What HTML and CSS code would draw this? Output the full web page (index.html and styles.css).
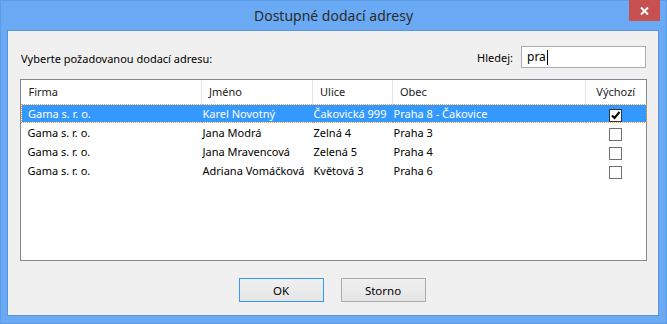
FILE: index.html
```html
<!DOCTYPE html>
<html lang="cs">
<head>
<meta charset="UTF-8" />
<title>Dostupné dodací adresy</title>
<link rel="stylesheet" href="styles.css">
</head>
<body>
  <div class="window">
    <div class="titlebar">
      <span class="title">Dostupné dodací adresy</span>
      <button class="close" type="button">
        <svg width="9" height="8" viewBox="0 0 9 8"><path d="M1 0.5 L8 7.5 M8 0.5 L1 7.5" stroke="#fff" stroke-width="2"/></svg>
      </button>
    </div>
    <div class="client">
      <div class="toprow">
        <span class="prompt">Vyberte požadovanou dodací adresu:</span>
        <label class="search">Hledej: <span class="input">pra<span class="caret"></span></span></label>
      </div>
      <div class="listbox">
        <table>
          <colgroup>
            <col class="c1"><col class="c2"><col class="c3"><col class="c4"><col class="c5">
          </colgroup>
          <thead>
            <tr><th>Firma</th><th>Jméno</th><th>Ulice</th><th>Obec</th><th class="center">Výchozí</th></tr>
          </thead>
          <tbody>
            <tr class="selected">
              <td class="first">Gama s. r. o.</td><td>Karel Novotný</td><td>Čakovická 999</td><td>Praha 8 - Čakovice</td>
              <td class="center"><span class="check on"><svg width="11" height="11" viewBox="0 0 11 11"><path d="M2 5.5 L4.5 8 L9.5 2" fill="none" stroke="#000" stroke-width="2"/></svg></span></td>
            </tr>
            <tr>
              <td class="first">Gama s. r. o.</td><td>Jana Modrá</td><td>Zelná 4</td><td>Praha 3</td>
              <td class="center"><span class="check"></span></td>
            </tr>
            <tr>
              <td class="first">Gama s. r. o.</td><td>Jana Mravencová</td><td>Zelená 5</td><td>Praha 4</td>
              <td class="center"><span class="check"></span></td>
            </tr>
            <tr>
              <td class="first">Gama s. r. o.</td><td>Adriana Vomáčková</td><td>Květová 3</td><td>Praha 6</td>
              <td class="center"><span class="check"></span></td>
            </tr>
          </tbody>
        </table>
      </div>
      <div class="buttons">
        <button class="btn default" type="button">OK</button>
        <button class="btn" type="button">Storno</button>
      </div>
    </div>
  </div>
</body>
</html>
```

FILE: styles.css
```css
html, body {
  margin: 0; height: 100%;
}
body {
  font-family: 'Noto Sans', 'Open Sans', sans-serif;
  font-size: 11px; color: #000;
  background: #6aaaf4;
}
.window {
  width: 667px; height: 324px; box-sizing: border-box;
  border: 1px solid #5d9be4;
  display: flex; flex-direction: column;
}
.titlebar {
  height: 29px; position: relative;
  display: flex; justify-content: center; align-items: center;
}
.title {
  font-size: 14px; color: #2a2a2a; margin-top: -1px;
}
.close {
  position: absolute; top: -1px; right: 6px;
  width: 31px; height: 21px; border: none; padding: 0;
  background: #c75050;
  display: flex; justify-content: center; align-items: center;
}
.client {
  flex: 1; margin: 0 7px 7px 6px;
  background: #f0f0f0; border: 1px solid #5c93d6;
  display: flex; flex-direction: column;
  padding: 15px 11px 13px 12px;
}
.toprow {
  display: flex; justify-content: space-between; align-items: center;
  height: 22px; padding-right: 1px;
}
.prompt {
  padding-left: 1px; margin-top: 2px;
}
.search {
  display: flex; align-items: center; gap: 8px;
}
.input {
  width: 118px; height: 20px; box-sizing: content-box;
  border: 1px solid #abadb3; background: #fff;
  padding-left: 5px; line-height: 20px; font-size: 12px;
  display: flex; align-items: center;
}
.caret {
  display: inline-block; width: 1px; height: 15px; background: #000; margin-left: 1px;
}
.listbox {
  margin-top: 11px; height: 182px; box-sizing: border-box;
  border: 1px solid #828790; background: #fff;
}
table {
  border-collapse: collapse; table-layout: fixed; width: 625px;
}
.c1 { width: 180px; }
.c2 { width: 111px; }
.c3 { width: 80px; }
.c4 { width: 193px; }
.c5 { width: 61px; }
th {
  height: 23px; padding: 0 0 1px 7px; text-align: left; font-weight: normal;
  border-right: 1px solid #e5e5e5; color: #1a1a1a;
  white-space: nowrap; overflow: hidden;
}
th:last-child { border-right: none; }
td {
  height: 19px; padding: 0 0 0 1px; white-space: nowrap; overflow: hidden;
  line-height: 19px;
}
td.first { padding-left: 6px; }
.center, th.center { text-align: center; padding-left: 0; padding-right: 1px; }
tr.selected td {
  background: #3399ff; color: #fff;
  border-top: 1px dotted #e8a040; border-bottom: 1px dotted #e8a040;
  height: 17px; line-height: 17px;
}
tr.selected td:first-child { border-left: 1px dotted #e8a040; }
tr.selected td:last-child { border-right: 1px dotted #e8a040; }
.check {
  display: inline-block; width: 11px; height: 11px;
  border: 1px solid #707070; background: #fff;
  vertical-align: middle; line-height: 0;
}
.check.on { border-color: #333; }
.buttons {
  margin-top: auto; display: flex; justify-content: center; gap: 17px;
  padding-right: 3px;
}
.btn {
  width: 85px; height: 24px; font: inherit; font-size: 11.5px; color: #000;
  border: 1px solid #acacac; padding: 0;
  background: linear-gradient(#f0f0f0, #e5e5e5);
}
.btn.default {
  border-color: #3399ff;
}
```
